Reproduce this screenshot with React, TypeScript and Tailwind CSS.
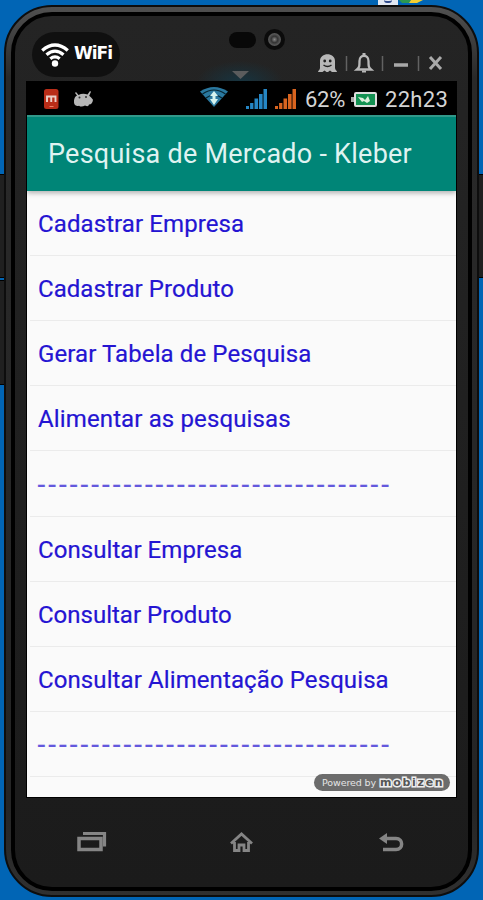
import React from "react";

const DASHES = "---------------------------------";
const DASH_STYLE = "ml-[-0.5px] text-[28px] tracking-[3px] opacity-70";

const rows: { text: string; spacing: string; line: string }[] = [
  { text: "Cadastrar Empresa", spacing: "tracking-[0.1px]", line: "h-[65px]" },
  { text: "Cadastrar Produto", spacing: "tracking-[0.05px]", line: "h-[65px]" },
  { text: "Gerar Tabela de Pesquisa", spacing: "tracking-[0.1px]", line: "h-[65px]" },
  { text: "Alimentar as pesquisas", spacing: "tracking-[0.13px]", line: "h-[65px]" },
  { text: DASHES, spacing: DASH_STYLE, line: "h-[66px]" },
  { text: "Consultar Empresa", spacing: "tracking-[0.06px]", line: "h-[65px]" },
  { text: "Consultar Produto", spacing: "tracking-[0px]", line: "h-[65px]" },
  { text: "Consultar Alimentação Pesquisa", spacing: "tracking-[0.1px]", line: "h-[65px]" },
  { text: DASHES, spacing: DASH_STYLE, line: "h-[65px]" },
];

function Signal({ color }: { color: string }) {
  return (
    <svg className="h-5 w-[21px]" viewBox="0 0 21 20" fill={color}>
      <path d="M0 20h3v-3H0zM4.100 20h3.300v-6h-3.300zM8.500 20h3.600v-10.500h-3.600zM13 20h3.600V5H13zM17.500 20h3.500V0h-3.500z" />
    </svg>
  );
}

function TopBezel() {
  return (
    <header className="relative h-[66px]">
      <div className="absolute left-[180px] top-[44px] h-[22px] w-[90px] bg-[radial-gradient(ellipse_at_bottom,#173440_0%,transparent_68%)]" />
      <div className="flex h-[45px] w-[88px] translate-x-[17px] translate-y-[16px] items-center rounded-full bg-[#101010] pl-[9px]">
        <svg className="h-[26px] w-[28px]" viewBox="0 0 28 26" fill="none" stroke="#fff" strokeWidth="3.300">
          <path d="M1.200 8.500Q14-2.500 26.800 8.500M5.500 12.800Q14 5.500 22.500 12.800M9.300 16.800Q14 13 18.700 16.800" />
          <circle cx="14" cy="21.500" r="3.200" fill="#fff" stroke="none" />
        </svg>
        <span className="ml-[5px] -translate-y-px font-['DejaVu_Sans',sans-serif] text-[17px] font-bold leading-none tracking-[-1px] text-white">WiFi</span>
      </div>
      <div className="absolute left-[214px] top-[16px] h-[16px] w-[27px] rounded-full bg-[#080808]" />
      <div className="absolute left-[249px] top-[13px] flex size-[21px] items-center justify-center rounded-full bg-[#0b0b0b]">
        <div className="size-[13px] rounded-full bg-[radial-gradient(circle,#888_0%,#333_35%,#555_60%,#555_75%)]" />
      </div>
      <svg className="absolute left-[217px] top-[55px] h-2 w-[17px]" viewBox="0 0 17 8"><path d="M0 0h17L8.500 8z" fill="#5b5c5d" /></svg>
      <svg className="absolute left-[301px] top-[35px] h-[25px] w-[130px]" viewBox="0 0 130 25" fill="none">
        <path d="M2 21c0-1.800 2-1.800 2-4V10c0-9 15-9 15 0v7c0 2.200 2 2.200 2 4h-5l-2-1.500-2 1.500h-1.500L8.500 19.500 6.500 21z" fill="#b8b8b8" />
        <circle cx="8.700" cy="10" r="1.400" fill="#222" /><circle cx="14.200" cy="10" r="1.400" fill="#222" />
        <path d="M7.500 14q4 3 8 0" stroke="#222" strokeWidth="1.500" />
        <path d="M30.500 5v15M66.500 5v15M102.500 5v15" stroke="#626262" strokeWidth="1.500" />
        <path d="M41 18.500c2.500-2 2.500-3.500 2.500-8.500 0-7 9-7 9 0 0 5 0 6.500 2.500 8.500z" stroke="#b8b8b8" strokeWidth="2.300" />
        <path d="M46 19.500h4v2h-4zM46.500 2h3v2.500h-3z" fill="#b8b8b8" />
        <path d="M78 14h14" stroke="#a8a8a8" strokeWidth="3.500" />
        <path d="m114 6 11 12m0-12-11 12" stroke="#aaa" strokeWidth="3" />
      </svg>
    </header>
  );
}

function StatusBar() {
  return (
    <div className="flex h-[33px] shrink-0 bg-black font-['Roboto',sans-serif] text-[#d4d4d4]">
      <svg className="ml-[17px] mt-[6px] h-[22px] w-[15px]" viewBox="0 0 15 22">
        <rect x="0" y="1" width="14.500" height="20" rx="2.500" fill="#b92d18" />
        <path d="M3 14V8.500h8.500V14M7.250 8.500V14" fill="none" stroke="#ead0c8" strokeWidth="1.900" />
        <path d="M5.500 18.500h4" stroke="#ec816a" />
      </svg>
      <svg className="ml-[14px] mt-[8px] h-[18px] w-[22px]" viewBox="0 0 22 18" fill="#b7b7b7">
        <path d="m3 2 2.500 3q4-2 9-.5L17 1l1 .7-1.800 4q2 1.500 3.800 4-.5 4.500-4 4.800-.5 3-4 1-3.500 2-6 .2Q.5 17 1 10.500q.5-4 3-5L2 3z" />
        <circle cx="6.500" cy="7.500" r="1" fill="#333" /><circle cx="13" cy="7" r="1" fill="#333" />
      </svg>
      <svg className="ml-[105px] mt-[5px] h-[20px] w-[28px]" viewBox="0 0 28 20">
        <path d="M0 4.500Q14-4.500 28 4.500L14 20z" fill="#2a789f" />
        <path d="M2.500 7Q14-1 25.500 7M6 11q8-6 16 0" fill="none" stroke="#072632" strokeWidth="1.200" />
        <path d="m14 4 4 5h-2.500v3H18l-4 6-4-6h2.500V9H10z" fill="#d6f3ef" />
      </svg>
      <div className="ml-[18px] mt-[7px]"><Signal color="#2586c4" /></div>
      <div className="ml-[8px] mt-[7px]"><Signal color="#d9641f" /></div>
      <span className="ml-[9px] mt-[5px] w-[42px] whitespace-nowrap text-[22px] leading-[26px] tracking-[-0.3px]">62%</span>
      <svg className="ml-[4px] mt-[10px] h-[15px] w-[26px]" viewBox="0 0 26 15">
        <rect x="4" y="1" width="21" height="13" rx="1" fill="#139152" stroke="#dedede" strokeWidth="2" />
        <path d="M0 5h3v5H0z" fill="#aaa" /><path d="m7 5 5 1 2 2 3-4 2 5-3 2-3-2-2 1z" fill="#dcefdc" />
      </svg>
      <span className="ml-[8px] mt-[5px] whitespace-nowrap text-[22px] leading-[26px] tracking-[0.3px]">22h23</span>
    </div>
  );
}

function Powered() {
  return (
    <div className="absolute bottom-[6px] right-[6px] flex h-[17px] w-[136px] items-center rounded-full bg-[#6c6c6c] pl-[8px] font-['DejaVu_Sans',sans-serif] text-white">
      <span className="whitespace-nowrap text-[9.500px] leading-none tracking-[-0.100px] text-[#e4e4e4]">Powered by</span>
      <span className="ml-[4px] text-[11px] font-bold leading-none tracking-[1.700px] text-[#555] [-webkit-text-stroke:3px_#eee] [paint-order:stroke_fill]">mobizen</span>
    </div>
  );
}

function NavigationBar() {
  return (
    <nav className="flex flex-1 items-start justify-between pl-[62px] pr-[71px] pt-[34px]">
      <svg className="h-[22px] w-[31px]" viewBox="0 0 31 22" fill="none" stroke="#858585">
        <path d="M6 2.500h21.500v13" strokeWidth="3.200" /><path d="M2 7.500h22v11H2z" strokeWidth="3.500" />
      </svg>
      <svg className="-ml-[4px] h-[23px] w-[25px]" viewBox="0 0 25 23" fill="none" stroke="#858585" strokeWidth="2.800">
        <path d="M2 12.500 12.500 3 23 12.500M5.500 11v8.500h4.500v-5.500h5v5.500h4.500V11" />
      </svg>
      <svg className="mt-px h-[22px] w-[25px]" viewBox="0 0 25 22" fill="none" stroke="#858585" strokeWidth="3.500">
        <path d="M5 6.500h12c7.500 0 7.500 11 0 11H4" /><path d="M0 6.500 8 1v11z" fill="#858585" stroke="none" />
      </svg>
    </nav>
  );
}

export default function App() {
  return (
    <main className="relative h-[900px] w-[483px] overflow-hidden bg-[#0165b5]">
      <div className="absolute left-0 top-[174px] h-[104px] w-[6px] border-y border-black bg-[#202020]" />
      <div className="absolute left-0 top-[280px] h-[105px] w-[6px] border-y border-black bg-[#202020]" />
      <div className="absolute right-0 top-[174px] h-[104px] w-[7px] border-y border-black bg-[#202020]" />
      <div className="absolute left-[378px] top-0 h-[5px] w-[20px] bg-[#e2e8f3]"><div className="ml-[6px] h-[3px] w-[8px] rounded-b-full border-b-2 border-[#304b8c]" /></div>
      <svg className="absolute left-[399px] top-0 h-[4px] w-[24px]" viewBox="0 0 24 4"><path d="M0 0h12l-2 3H3z" fill="#2b9852" /><path d="M12 0h12l-6 3h-8z" fill="#f4ce31" /></svg>

      <div className="relative ml-[4px] h-[897px] w-[475px] pt-[5px]">
        <div className="h-[892px] rounded-[48px] border-2 border-[#0d0d0d] bg-[linear-gradient(180deg,#505050_0%,#292929_8%,#252525_90%,#303030_100%)] px-[5px] pb-[4px] pt-[5px]">
          <div className="h-full rounded-[41px] border-4 border-black bg-[linear-gradient(180deg,#242424,#1b1b1b)]">
            <div className="-ml-[15px] flex h-full w-[475px] flex-col pl-[15px]">
              <TopBezel />
              <section className="relative ml-[12px] flex h-[715px] w-[429px] shrink-0 flex-col overflow-hidden bg-[#fafafa] shadow-[0_0_0_1px_#000]">
                <StatusBar />
                <div className="relative flex h-[76px] shrink-0 items-center border-t-2 border-[#32998a] bg-[#008577] pl-[21px] pt-px font-['Roboto',sans-serif] shadow-[0_2px_5px_rgba(0,0,0,.3)]">
                  <h1 className="whitespace-nowrap text-[27px] font-normal leading-none tracking-[0.25px] text-[#dff3f1]">Pesquisa de Mercado - Kleber</h1>
                </div>
                <ul className="font-['Roboto',sans-serif] text-[24px] text-[#2414d2]">
                  {rows.map((row, index) => (
                    <li key={index} className={`ml-[3px] flex items-center whitespace-nowrap border-b border-[#ebebeb] pl-[8px] pt-[2px] leading-none [-webkit-text-stroke:0.2px_#2414d2] ${row.line}`}>
                      <span className={row.spacing}>{row.text}</span>
                    </li>
                  ))}
                </ul>
                <Powered />
              </section>
              <NavigationBar />
            </div>
          </div>
        </div>
      </div>
    </main>
  );
}
